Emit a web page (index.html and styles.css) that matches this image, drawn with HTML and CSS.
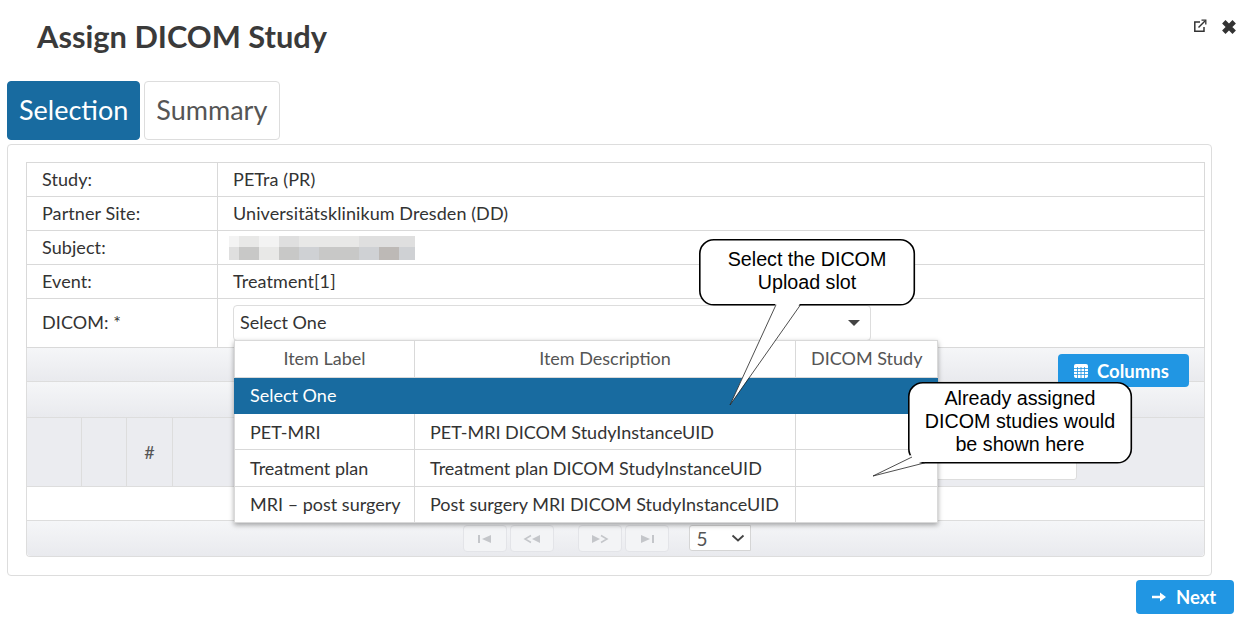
FILE: index.html

```html
<!DOCTYPE html>
<html lang="en">
<head>
    <meta charset="UTF-8">
    <title>Assign DICOM Study</title>
    <link rel="stylesheet" href="styles.css">
</head>
<body>
<div class="page">
    <header class="top">
        <h1>Assign DICOM Study</h1>
        <div class="top-icons">
            <svg width="14" height="14" viewBox="0 0 14 14" fill="none" stroke="#333" stroke-width="1.5">
                <path d="M7 3H1.8V12.2H11V8"/>
                <path d="M5.5 8.5L12 2"/>
                <path d="M8.5 1.2H12.8V5.5" stroke-width="1.3"/>
            </svg>
            <svg width="16" height="16" viewBox="0 0 16 16" fill="none" stroke="#333" stroke-width="4.8">
                <path d="M2.8 2.8L13.2 13.2M13.2 2.8L2.8 13.2"/>
            </svg>
        </div>
    </header>

    <nav class="tabs">
        <a class="tab active">Selection</a>
        <a class="tab">Summary</a>
    </nav>

    <section class="panel">
        <table class="info">
            <tr><td class="lbl">Study:</td><td>PETra (PR)</td></tr>
            <tr><td class="lbl">Partner Site:</td><td>Universitätsklinikum Dresden (DD)</td></tr>
            <tr>
                <td class="lbl">Subject:</td>
                <td class="blur-cell">
                    <div class="blur">
                        <i class="w10 c1"></i><i class="w20 c2"></i><i class="w20 c1"></i><i class="w20 c3"></i><i class="w20 c2"></i><i class="w20 c2"></i><i class="w20 c2"></i><i class="w20 c3"></i><i class="w20 c3"></i><i class="w16 c3"></i>
                        <i class="w10 c3"></i><i class="w20 c5"></i><i class="w20 c2"></i><i class="w20 c5"></i><i class="w20 c4"></i><i class="w20 c5"></i><i class="w20 c5"></i><i class="w20 c4"></i><i class="w20 c6"></i><i class="w16 c4"></i>
                    </div>
                </td>
            </tr>
            <tr><td class="lbl">Event:</td><td>Treatment[1]</td></tr>
            <tr class="dicom-row">
                <td class="lbl">DICOM: *</td>
                <td>
                    <div class="select">
                        <span>Select One</span>
                        <i class="caret"></i>
                    </div>
                </td>
            </tr>
        </table>

        <div class="datatable">
            <div class="dt-bar dt-tools">
                <button class="btn btn-columns">
                    <svg width="14" height="14" viewBox="0 0 14 14">
                        <rect width="14" height="14" rx="2" fill="#fff"/>
                        <path d="M0 4.5H14M0 7.5H14M0 10.5H14M3.5 3V14M7 3V14M10.500 3V14" stroke="#2196e3" stroke-width="0.8"/>
                    </svg>
                    Columns
                </button>
            </div>
            <div class="dt-bar dt-empty"></div>
            <div class="dt-head">
                <div class="dt-col c-a"></div>
                <div class="dt-col c-b"></div>
                <div class="dt-col c-c">#</div>
                <div class="dt-col c-rest"><input class="filter" type="text"></div>
            </div>
            <div class="dt-row"></div>
            <div class="dt-bar dt-pager">
                <span class="pg">
                    <svg width="16" height="10" viewBox="0 0 16 10" fill="#c4c6ca"><path d="M1 1h2v8H1zM14 1v8L5 5z"/></svg>
                </span>
                <span class="pg">
                    <svg width="18" height="10" viewBox="0 0 18 10" fill="#c4c6ca"><path d="M17 1v8L9 5z"/><path d="M8 1.500L2 5l6 3.500" fill="none" stroke="#c4c6ca" stroke-width="1.500"/></svg>
                </span>
                <span class="pg pg-next">
                    <svg width="18" height="10" viewBox="0 0 18 10" fill="#c4c6ca"><path d="M1 1v8l8-4z"/><path d="M10 1.500L16 5l-6 3.500" fill="none" stroke="#c4c6ca" stroke-width="1.500"/></svg>
                </span>
                <span class="pg">
                    <svg width="16" height="10" viewBox="0 0 16 10" fill="#c4c6ca"><path d="M2 1v8l9-4zM13 1h2v8h-2z"/></svg>
                </span>
                <div class="rows-select">
                    <span>5</span>
                    <svg width="14" height="8" viewBox="0 0 14 8" fill="none" stroke="#444" stroke-width="1.800"><path d="M1.500 1.500L7 6.500L12.500 1.500"/></svg>
                </div>
            </div>
        </div>
    </section>

    <footer class="bottom">
        <button class="btn btn-next">
            <svg width="14" height="10" viewBox="0 0 14 10" fill="#fff"><path d="M0 3.700H8V0.500L14 5L8 9.500V6.300H0z"/></svg>
            Next
        </button>
    </footer>

    <div class="dropdown">
        <table>
            <thead>
                <tr><th class="d1">Item Label</th><th class="d2">Item Description</th><th class="d3">DICOM Study</th></tr>
            </thead>
            <tbody>
                <tr class="selected"><td colspan="3">Select One</td></tr>
                <tr><td>PET-MRI</td><td>PET-MRI DICOM StudyInstanceUID</td><td></td></tr>
                <tr class="tall"><td>Treatment plan</td><td>Treatment plan DICOM StudyInstanceUID</td><td></td></tr>
                <tr class="last"><td>MRI – post surgery</td><td>Post surgery MRI DICOM StudyInstanceUID</td><td></td></tr>
            </tbody>
        </table>
    </div>

    <div class="callout callout-slot">
        <svg width="240" height="170" viewBox="0 0 240 170">
            <rect class="bubble" x="0.8" y="0.8" width="214.500" height="65" rx="14"/>
            <path class="tail-fill" d="M77 64L31 166L101.500 64Z"/>
            <path class="tail-line" d="M77 65.800L31 166L101.500 65.800"/>
        </svg>
        <p>Select the DICOM<br>Upload slot</p>
    </div>

    <div class="callout callout-assigned">
        <svg width="270" height="100" viewBox="0 0 270 100">
            <rect class="bubble" x="36.800" y="0.8" width="222.500" height="80" rx="14"/>
            <path class="tail-fill" d="M39 73L1 94L54 79Z"/>
            <path class="tail-line" d="M40 75L1 94L53 80.800"/>
        </svg>
        <p>Already assigned<br>DICOM studies would<br>be shown here</p>
    </div>
</div>
</body>
</html>
```

FILE: styles.css

```css
* {
    box-sizing: border-box;
}
body {
    margin: 0;
    font-family: Lato, "Open Sans", sans-serif;
    font-size: 18px;
    color: #333;
    background: #fff;
}
.page {
    position: relative;
    width: 1243px;
    height: 618px;
    overflow: hidden;
}

/* header */
.top {
    display: flex;
    justify-content: space-between;
    height: 81px;
    padding: 18px 6px 0 37px;
}
.top h1 {
    margin: 0;
    font-size: 30.800px;
    line-height: 38px;
    font-weight: 700;
    color: #3a3a3a;
}
.top-icons {
    display: flex;
    gap: 14px;
    padding-top: 1px;
}

/* tabs */
.tabs {
    display: flex;
    gap: 4px;
    padding-left: 7px;
}
.tab {
    height: 59px;
    line-height: 56px;
    padding: 0 11px;
    font-size: 27px;
    color: #555;
    border: 1px solid #ddd;
    border-radius: 4px;
}
.tab:last-child {
    padding-right: 12px;
}
.tab.active {
    background: #186ba0;
    border-color: #186ba0;
    color: #fff;
}

/* panel */
.panel {
    width: 1205px;
    height: 432px;
    margin: 4px 0 0 7px;
    padding: 17px 6px 0 18px;
    border: 1px solid #ddd;
    border-radius: 4px;
}
.info {
    width: 1179px;
    border-collapse: collapse;
    table-layout: fixed;
    letter-spacing: 0.08px;
}
.info td {
    height: 34px;
    padding: 0 15px 2px;
    border: 1px solid #d9d9d9;
}
.info .blur-cell {
    padding-bottom: 0;
}
.info .lbl {
    width: 191px;
}
.dicom-row td {
    height: 49px;
    vertical-align: top;
}
.info .dicom-row .lbl {
    padding-top: 12px;
}
.blur {
    display: flex;
    flex-wrap: wrap;
    width: 186px;
    margin-left: -4px;
}
.blur i {
    display: block;
    height: 11px;
}
.blur i:nth-child(n+11) {
    height: 13px;
}
.w10 { width: 10px; }
.w16 { width: 16px; }
.w20 { width: 20px; }
.c1 { background: #f3f3f3; }
.c2 { background: #e8e8e7; }
.c3 { background: #dfdfdf; }
.c4 { background: #cfd1d4; }
.c5 { background: #c8c8c7; }
.c6 { background: #bdb9b6; }

.select {
    display: flex;
    justify-content: space-between;
    align-items: center;
    width: 638px;
    height: 36px;
    margin-top: 6px;
    padding: 0 10px 2px 6px;
    border: 1px solid #ddd;
    border-radius: 4px;
    letter-spacing: 0;
}
.caret {
    width: 0;
    height: 0;
    margin-top: 2px;
    border-left: 6px solid transparent;
    border-right: 6px solid transparent;
    border-top: 6px solid #444;
}

/* data table */
.datatable {
    width: 1179px;
    height: 209px;
    border: 1px solid #ddd;
    border-top: 0;
    border-radius: 0 0 4px 4px;
}
.dt-bar {
    background: linear-gradient(to bottom, #f5f6f8, #e9eaee);
    border-bottom: 1px solid #ddd;
}
.dt-tools {
    display: flex;
    justify-content: flex-end;
    height: 34px;
    padding: 6px 15px 0 0;
}
.dt-empty {
    height: 36px;
}
.dt-head {
    display: flex;
    height: 69px;
    background: #ebecf0;
    border-bottom: 1px solid #ddd;
    color: #555;
}
.dt-col {
    display: flex;
    align-items: center;
    justify-content: center;
    border-right: 1px solid #ddd;
}
.c-a { width: 55px; }
.c-b { width: 45px; }
.c-c { width: 46px; }
.c-rest {
    flex: 1;
    border-right: 0;
    justify-content: flex-end;
    padding: 27px 127px 6px 0;
}
.filter {
    width: 800px;
    height: 34px;
    border: 1px solid #ddd;
    border-radius: 3px;
    background: #fff;
}
.dt-row {
    height: 34px;
    border-bottom: 1px solid #ddd;
}
.dt-pager {
    display: flex;
    align-items: flex-start;
    justify-content: center;
    gap: 3px;
    height: 35px;
    padding: 4px 18px 0 0;
    border-bottom: 0;
    border-radius: 0 0 4px 4px;
}
.pg {
    display: flex;
    align-items: center;
    justify-content: center;
    width: 44px;
    height: 27px;
    border: 1px solid #e3e4e8;
    border-radius: 4px;
    background: #f3f4f6;
}
.pg-next {
    margin-left: 21px;
}
.rows-select {
    display: flex;
    align-items: center;
    justify-content: space-between;
    width: 62px;
    height: 26px;
    margin-left: 17px;
    padding: 0 5px 0 7px;
    font-size: 19px;
    color: #555;
    background: #fff;
    border: 1px solid #d5d5d5;
    border-radius: 3px 0 0 3px;
}

/* buttons */
.btn {
    display: flex;
    align-items: center;
    font-family: Lato, sans-serif;
    font-weight: 700;
    color: #fff;
    background: #2196e3;
    border: 0;
    border-radius: 4px;
}
.btn-columns {
    position: relative;
    gap: 9px;
    width: 131px;
    height: 33px;
    padding: 0 0 0 16px;
    font-size: 18.500px;
}
.bottom {
    display: flex;
    justify-content: flex-end;
    padding: 4px 9px 0 0;
}
.btn-next {
    gap: 10px;
    width: 98px;
    height: 34px;
    padding: 0 0 0 16px;
    font-size: 18.500px;
}

/* open dropdown, over the form */
.dropdown {
    position: absolute;
    left: 234px;
    top: 340px;
    width: 704px;
    height: 183px;
    background: #fff;
    box-shadow: 0 2px 5px rgba(0, 0, 0, 0.35);
}
.dropdown table {
    width: 703px;
    border-collapse: collapse;
    table-layout: fixed;
}
.dropdown th, .dropdown td {
    padding: 0 15px;
    border: 1px solid #d9d9d9;
    text-align: left;
    white-space: nowrap;
}
.dropdown th {
    height: 37px;
    padding-bottom: 2px;
    font-weight: 400;
    text-align: center;
    color: #555;
}
.dropdown td {
    height: 36px;
}
.dropdown .tall td {
    height: 37px;
}
.dropdown .d1 { width: 180px; }
.dropdown .d2 { width: 381px; }
.dropdown .d3 { width: 142px; }
.dropdown .selected td {
    padding-bottom: 2px;
    background: #186ba0;
    border-color: #186ba0;
    color: #fff;
}
.dropdown .last td {
    padding-bottom: 2px;
}

/* annotation bubbles */
.callout {
    position: absolute;
    font-family: "Liberation Sans", Arial, sans-serif;
    font-size: 19.700px;
    line-height: 23px;
    color: #000;
    text-align: center;
}
.callout svg {
    position: absolute;
    left: 0;
    top: 0;
}
.callout p {
    position: relative;
    margin: 0;
}
.bubble {
    fill: #fff;
    stroke: #000;
    stroke-width: 1.600;
}
.tail-fill {
    fill: #fff;
}
.tail-line {
    fill: none;
    stroke: #222;
    stroke-width: 0.8;
}
.callout-slot {
    left: 699px;
    top: 239px;
    width: 216px;
    padding-top: 9px;
}
.callout-assigned {
    left: 872px;
    top: 382px;
    width: 260px;
    padding: 5px 0 0 36px;
}
```
